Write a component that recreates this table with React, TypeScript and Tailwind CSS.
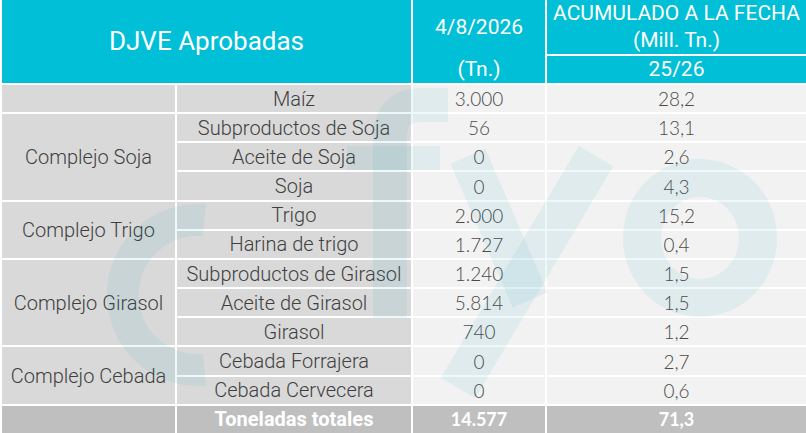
import React from "react";

type Group = { group: string; items: [string, string, string][] };

const groups: Group[] = [
  { group: "", items: [["Maíz", "3.000", "28,2"]] },
  {
    group: "Complejo Soja",
    items: [
      ["Subproductos de Soja", "56", "13,1"],
      ["Aceite de Soja", "0", "2,6"],
      ["Soja", "0", "4,3"],
    ],
  },
  {
    group: "Complejo Trigo",
    items: [
      ["Trigo", "2.000", "15,2"],
      ["Harina de trigo", "1.727", "0,4"],
    ],
  },
  {
    group: "Complejo Girasol",
    items: [
      ["Subproductos de Girasol", "1.240", "1,5"],
      ["Aceite de Girasol", "5.814", "1,5"],
      ["Girasol", "740", "1,2"],
    ],
  },
  {
    group: "Complejo Cebada",
    items: [
      ["Cebada Forrajera", "0", "2,7"],
      ["Cebada Cervecera", "0", "0,6"],
    ],
  },
];

const spanClass: Record<number, string> = {
  1: "row-span-1",
  2: "row-span-2",
  3: "row-span-3",
};

const label =
  "flex items-center justify-center bg-[#d9d9d9] text-[#3f3f3f] font-['Roboto',sans-serif] font-light text-[20px] leading-none whitespace-nowrap";
const num =
  "flex items-center justify-center bg-[#f2f2f2] text-[#4a4a4a] font-['Lato',sans-serif] font-light text-[19px] leading-none";

export default function App() {
  return (
    <div className="w-[806px] h-[433px] bg-white overflow-hidden">
      <div className="relative grid h-[433px] grid-cols-[173px_234px_132px_259px] grid-rows-[83px_repeat(12,minmax(0,1fr))] gap-[2px] pl-[2px] bg-white">
        {/* Header */}
        <div className="col-span-2 flex items-center justify-center bg-[#00bfd6] text-white font-['Roboto',sans-serif] text-[26px] pb-[1px]">
          DJVE Aprobadas
        </div>
        <div className="flex flex-col items-center justify-between bg-[#00bfd6] text-white font-['Roboto',sans-serif] text-[21px] leading-[28px] pt-[13px] pb-[0px]">
          <div>4/8/2026</div>
          <div>(Tn.)</div>
        </div>
        <div className="flex flex-col gap-[2px] bg-white">
          <div className="h-[54px] flex flex-col items-center justify-center bg-[#00bfd6] text-white font-['Roboto',sans-serif] text-[21px] leading-[27px]">
            <div>ACUMULADO A LA FECHA</div>
            <div>(Mill. Tn.)</div>
          </div>
          <div className="flex-1 flex items-center justify-center bg-[#00bfd6] text-white font-['Roboto',sans-serif] text-[21px] leading-none">
            25/26
          </div>
        </div>

        {/* Body */}
        {groups.map((g) => (
          <React.Fragment key={g.group || "maiz"}>
            {g.items.map((it, i) => (
              <React.Fragment key={it[0]}>
                {i === 0 && (
                  <div className={`${spanClass[g.items.length]} ${label}`}>
                    {g.group}
                  </div>
                )}
                <div className={label}>{it[0]}</div>
                <div className={num}>{it[1]}</div>
                <div className={num}>{it[2]}</div>
              </React.Fragment>
            ))}
          </React.Fragment>
        ))}

        {/* Total */}
        <div className="bg-[#bfbfbf]" />
        <div className="flex items-center justify-center bg-[#bfbfbf] text-white font-['Roboto',sans-serif] font-bold text-[20px] leading-none">
          Toneladas totales
        </div>
        <div className="flex items-center justify-center bg-[#bfbfbf] text-white font-['Lato',sans-serif] font-bold text-[18px] leading-none">
          14.577
        </div>
        <div className="flex items-center justify-center bg-[#bfbfbf] text-white font-['Lato',sans-serif] font-bold text-[18px] leading-none">
          71,3
        </div>

        {/* Watermark logo */}
        <svg
          className="pointer-events-none absolute left-0 top-0"
          width="806"
          height="433"
          viewBox="0 0 806 433"
        >
          <defs>
            <clipPath id="body">
              <rect x="0" y="85" width="806" height="320" />
            </clipPath>
          </defs>
          <g
            clipPath="url(#body)"
            fill="none"
            stroke="#0097b5"
            strokeOpacity="0.07"
          >
            <path d="M204.5 220.3 A75 75 0 1 0 204.5 369.7" strokeWidth="32" />
            <path d="M390 318 V138 Q390 105 422 105 H448" strokeWidth="34" />
            <path d="M347 158 H440" strokeWidth="24" />
            <path d="M468 156 L530 300" strokeWidth="38" />
            <path d="M596 156 L458 388" strokeWidth="40" />
            <ellipse cx="700" cy="238" rx="58" ry="60" strokeWidth="38" />
          </g>
        </svg>
      </div>
    </div>
  );
}
